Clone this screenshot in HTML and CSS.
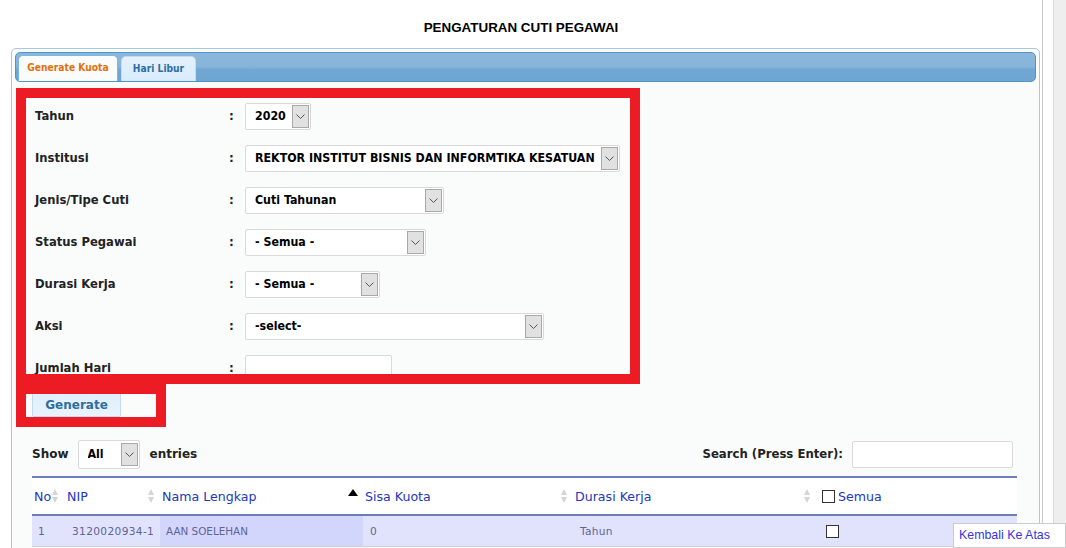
FILE: index.html
```html
<!DOCTYPE html>
<html>
<head>
<meta charset="utf-8">
<title>Pengaturan Cuti Pegawai</title>
<link rel="stylesheet" href="styles.css">
</head>
<body>
<div class="page">
  <h1 class="title">PENGATURAN CUTI PEGAWAI</h1>
  <div class="panel">
    <div class="tabbar">
      <div class="tab tab-active">Generate Kuota</div>
      <div class="tab">Hari Libur</div>
    </div>
    <div class="tab-content">
      <div class="form">
        <div class="label">Tahun</div><div class="colon">:</div>
        <div class="field"><div class="select w-tahun"><span class="sel-text">2020</span><span class="arrow"><svg width="9" height="5" viewBox="0 0 9 5"><polyline points="0.5,0.5 4.5,4.5 8.5,0.5" fill="none" stroke="#555" stroke-width="1"/></svg></span></div></div>

        <div class="label">Institusi</div><div class="colon">:</div>
        <div class="field"><div class="select w-inst"><span class="sel-text">REKTOR INSTITUT BISNIS DAN INFORMTIKA KESATUAN</span><span class="arrow"><svg width="9" height="5" viewBox="0 0 9 5"><polyline points="0.5,0.5 4.5,4.5 8.5,0.5" fill="none" stroke="#555" stroke-width="1"/></svg></span></div></div>

        <div class="label">Jenis/Tipe Cuti</div><div class="colon">:</div>
        <div class="field"><div class="select w-jenis"><span class="sel-text">Cuti Tahunan</span><span class="arrow"><svg width="9" height="5" viewBox="0 0 9 5"><polyline points="0.5,0.5 4.5,4.5 8.5,0.5" fill="none" stroke="#555" stroke-width="1"/></svg></span></div></div>

        <div class="label">Status Pegawai</div><div class="colon">:</div>
        <div class="field"><div class="select w-status"><span class="sel-text">- Semua -</span><span class="arrow"><svg width="9" height="5" viewBox="0 0 9 5"><polyline points="0.5,0.5 4.5,4.5 8.5,0.5" fill="none" stroke="#555" stroke-width="1"/></svg></span></div></div>

        <div class="label">Durasi Kerja</div><div class="colon">:</div>
        <div class="field"><div class="select w-durasi"><span class="sel-text">- Semua -</span><span class="arrow"><svg width="9" height="5" viewBox="0 0 9 5"><polyline points="0.5,0.5 4.5,4.5 8.5,0.5" fill="none" stroke="#555" stroke-width="1"/></svg></span></div></div>

        <div class="label">Aksi</div><div class="colon">:</div>
        <div class="field"><div class="select w-aksi"><span class="sel-text">-select-</span><span class="arrow"><svg width="9" height="5" viewBox="0 0 9 5"><polyline points="0.5,0.5 4.5,4.5 8.5,0.5" fill="none" stroke="#555" stroke-width="1"/></svg></span></div></div>

        <div class="label">Jumlah Hari</div><div class="colon">:</div>
        <div class="field"><div class="input w-jumlah"></div></div>
      </div>
      <div class="btn-row"><button class="btn">Generate</button></div>

      <div class="controls">
        <div class="show">
          <span class="ctl-label">Show</span>
          <div class="select w-all"><span class="sel-text">All</span><span class="arrow"><svg width="9" height="5" viewBox="0 0 9 5"><polyline points="0.5,0.5 4.5,4.5 8.5,0.5" fill="none" stroke="#555" stroke-width="1"/></svg></span></div>
          <span class="ctl-label">entries</span>
        </div>
        <div class="search">
          <span class="ctl-label">Search (Press Enter):</span>
          <div class="input w-search"></div>
        </div>
      </div>

      <table class="grid">
        <colgroup>
          <col class="c-no"><col class="c-nip"><col class="c-nama"><col class="c-sisa"><col class="c-durasi"><col class="c-semua">
        </colgroup>
        <thead>
          <tr>
            <th><div class="th-in th-no"><span>No</span><span class="sort"></span></div></th>
            <th><div class="th-in"><span>NIP</span><span class="sort"></span></div></th>
            <th><div class="th-in"><span>Nama Lengkap</span><span class="sort-asc"></span></div></th>
            <th><div class="th-in"><span>Sisa Kuota</span><span class="sort"></span></div></th>
            <th><div class="th-in"><span>Durasi Kerja</span><span class="sort"></span></div></th>
            <th><div class="th-in th-semua"><span class="cb"></span><span>Semua</span></div></th>
          </tr>
        </thead>
        <tbody>
          <tr>
            <td>1</td>
            <td class="nip">3120020934-1</td>
            <td class="sorted">AAN SOELEHAN</td>
            <td>0</td>
            <td>Tahun</td>
            <td class="td-cb"><span class="cb"></span></td>
          </tr>
        </tbody>
      </table>
    </div>
  </div>
</div>

<div class="mark mark-form"></div>
<div class="mark mark-btn"></div>
<a class="to-top" href="#">Kembali Ke Atas</a>
</body>
</html>
```

FILE: styles.css
```css
* { box-sizing: border-box; }
html, body { margin: 0; padding: 0; }
body {
  width: 1066px;
  height: 548px;
  overflow: hidden;
  background: linear-gradient(to right, #fff 0, #fff 1053px, #d9d9d9 1053px, #d9d9d9 1054px, #eeeeee 1054px);
  font-family: "DejaVu Sans", Verdana, sans-serif;
  position: relative;
}
.page {
  width: 1043px;
  min-height: 548px;
  background: #fff;
  border-right: 1px solid #c8c8c8;
  padding-top: 20px;
}
.title {
  margin: 0;
  height: 28px;
  text-align: center;
  font-family: "Liberation Sans", Arial, sans-serif;
  font-size: 13.4px;
  font-weight: bold;
  line-height: 15px;
  color: #000;
}
.panel {
  margin-left: 11px;
  width: 1029px;
  height: 520px;
  border: 1px solid #a6c9e2;
  border-radius: 5px;
  background: #fafcfc;
  padding: 3px;
}
.tabbar {
  height: 30px;
  border: 1px solid #4f94cf;
  border-radius: 5px;
  background: linear-gradient(to bottom, #8ab7da 0, #87b5da 50%, #71a8d3 58%, #6ea5d1 100%);
  display: flex;
  align-items: flex-end;
  padding-left: 2px;
  gap: 3px;
}
.tab {
  height: 25px;
  width: 75px;
  text-align: center;
  border: 1px solid #c5dbec;
  border-bottom: none;
  border-radius: 5px 5px 0 0;
  background: linear-gradient(to bottom, #e4f1fc, #d9ebfb);
  color: #2e6e9e;
  font-family: "DejaVu Sans Condensed", "DejaVu Sans", sans-serif;
  font-stretch: condensed;
  font-size: 10.2px;
  font-weight: bold;
  line-height: 23px;
}
.tab-active {
  width: 100px;
  background: #fafcfc;
  border-color: #79b7e7;
  color: #e17009;
  height: 26px;
}
.tab-content {
  padding: 13px 18px 0 17px;
}
.form {
  display: grid;
  grid-template-columns: 197px 16px 1fr;
  grid-auto-rows: 42px;
  align-items: center;
}
.label {
  padding-left: 3px;
  font-size: 11.6px;
  font-weight: bold;
  color: #222;
}
.colon {
  font-size: 12px;
  font-weight: bold;
  color: #222;
}
.select {
  height: 27px;
  border: 1px solid #d9d9d9;
  border-radius: 2px;
  background: #fff;
  display: flex;
  align-items: center;
  justify-content: space-between;
  padding: 0 1px 0 9px;
}
.sel-text {
  font-family: "DejaVu Sans Condensed", "DejaVu Sans", sans-serif;
  font-stretch: condensed;
  font-size: 12.3px;
  font-weight: bold;
  color: #000;
  white-space: nowrap;
  overflow: hidden;
}
.arrow {
  flex: none;
  width: 17px;
  height: 23px;
  background: #e1e1e1;
  border: 1px solid #a9a9a9;
  display: flex;
  align-items: center;
  justify-content: center;
}
.input {
  height: 27px;
  border: 1px solid #d9d9d9;
  border-radius: 2px;
  background: #fff;
}
.w-tahun { width: 66px; }
.w-inst { width: 375px; }
.w-jenis { width: 199px; }
.w-status { width: 181px; }
.w-durasi { width: 135px; }
.w-aksi { width: 299px; }
.w-jumlah { width: 147px; }
.w-all { width: 62px; height: 29px; }
.w-search { width: 161px; }
.btn-row {
  height: 45px;
  padding-top: 3px;
}
.btn {
  width: 89px;
  height: 25px;
  border: 1px solid #c5dbec;
  border-radius: 2px;
  background: linear-gradient(to bottom, #dfeffc, #e8f3fd);
  color: #2e6e9e;
  font-family: "DejaVu Sans", Verdana, sans-serif;
  font-size: 12px;
  font-weight: bold;
  padding: 0;
}
.controls {
  margin-top: 3px;
  display: flex;
  justify-content: space-between;
  align-items: center;
  height: 34px;
}
.show, .search {
  display: flex;
  align-items: center;
}
.show .ctl-label:first-child { margin-right: 9px; }
.show .ctl-label:last-child { margin-left: 10px; }
.search { gap: 9px; padding-right: 5px; }
.search .ctl-label { font-size: 11.7px; }
.ctl-label {
  font-size: 12px;
  font-weight: bold;
  color: #222;
}
.grid {
  margin-top: 5px;
  width: 985px;
  border-collapse: collapse;
  table-layout: fixed;
}
.c-no { width: 33px; }
.c-nip { width: 95px; }
.c-nama { width: 203px; }
.c-sisa { width: 210px; }
.c-durasi { width: 243px; }
.c-semua { width: 201px; }
.grid thead tr {
  border-top: 2px solid #6d7db8;
  border-bottom: 2px solid #6d7db8;
  background: #fff;
}
.grid th {
  height: 38px;
  padding: 0 5px 0 2px;
  text-align: left;
  font-weight: normal;
  font-size: 12.6px;
  color: #2238bd;
}
.th-in {
  display: flex;
  align-items: center;
  justify-content: space-between;
}
.th-no { padding-right: 1px; }
.sort {
  flex: none;
  width: 7px;
  height: 14px;
  position: relative;
}
.sort::before, .sort::after {
  content: "";
  position: absolute;
  left: 0;
  border-left: 3.5px solid transparent;
  border-right: 3.5px solid transparent;
}
.sort::before { top: 0; border-bottom: 6px solid #d3d3d3; }
.sort::after { bottom: 0; border-top: 6px solid #d3d3d3; }
.sort-asc {
  flex: none;
  width: 0;
  height: 0;
  border-left: 5px solid transparent;
  border-right: 5px solid transparent;
  border-bottom: 7px solid #000;
  margin-top: -8px;
}
.th-semua {
  justify-content: flex-start;
  padding-left: 4px;
  gap: 3px;
}
.cb {
  display: inline-block;
  width: 13px;
  height: 13px;
  border: 1px solid #333;
  background: #fff;
}
.grid tbody tr {
  background: #e1e3fd;
  border-bottom: 1px solid #cfcfcf;
}
.grid td {
  height: 31px;
  padding: 0 0 0 7px;
  font-size: 10.6px;
  color: #5e6496;
  letter-spacing: 0.3px;
}
.grid td:first-child { padding-left: 6px; }
.grid td.nip { letter-spacing: 0.35px; }
.grid td.sorted { background: #d3d6fc; padding-left: 6px; letter-spacing: 0; font-size: 10.4px; }
.grid td.td-cb { padding-left: 10px; }
.grid td.td-cb .cb { vertical-align: middle; }

.mark {
  position: absolute;
  border: 10px solid #ed1c24;
}
.mark-form { left: 16px; top: 88px; width: 624px; height: 296px; }
.mark-btn { left: 16px; top: 384px; width: 150px; height: 43px; }

.to-top {
  position: absolute;
  left: 953px;
  top: 523px;
  width: 113px;
  height: 25px;
  background: #fff;
  border: 1px solid #cccccc;
  font-family: "Liberation Sans", Arial, sans-serif;
  font-size: 12.4px;
  color: #3535e0;
  text-decoration: none;
  line-height: 22px;
  padding-left: 5px;
}
```
